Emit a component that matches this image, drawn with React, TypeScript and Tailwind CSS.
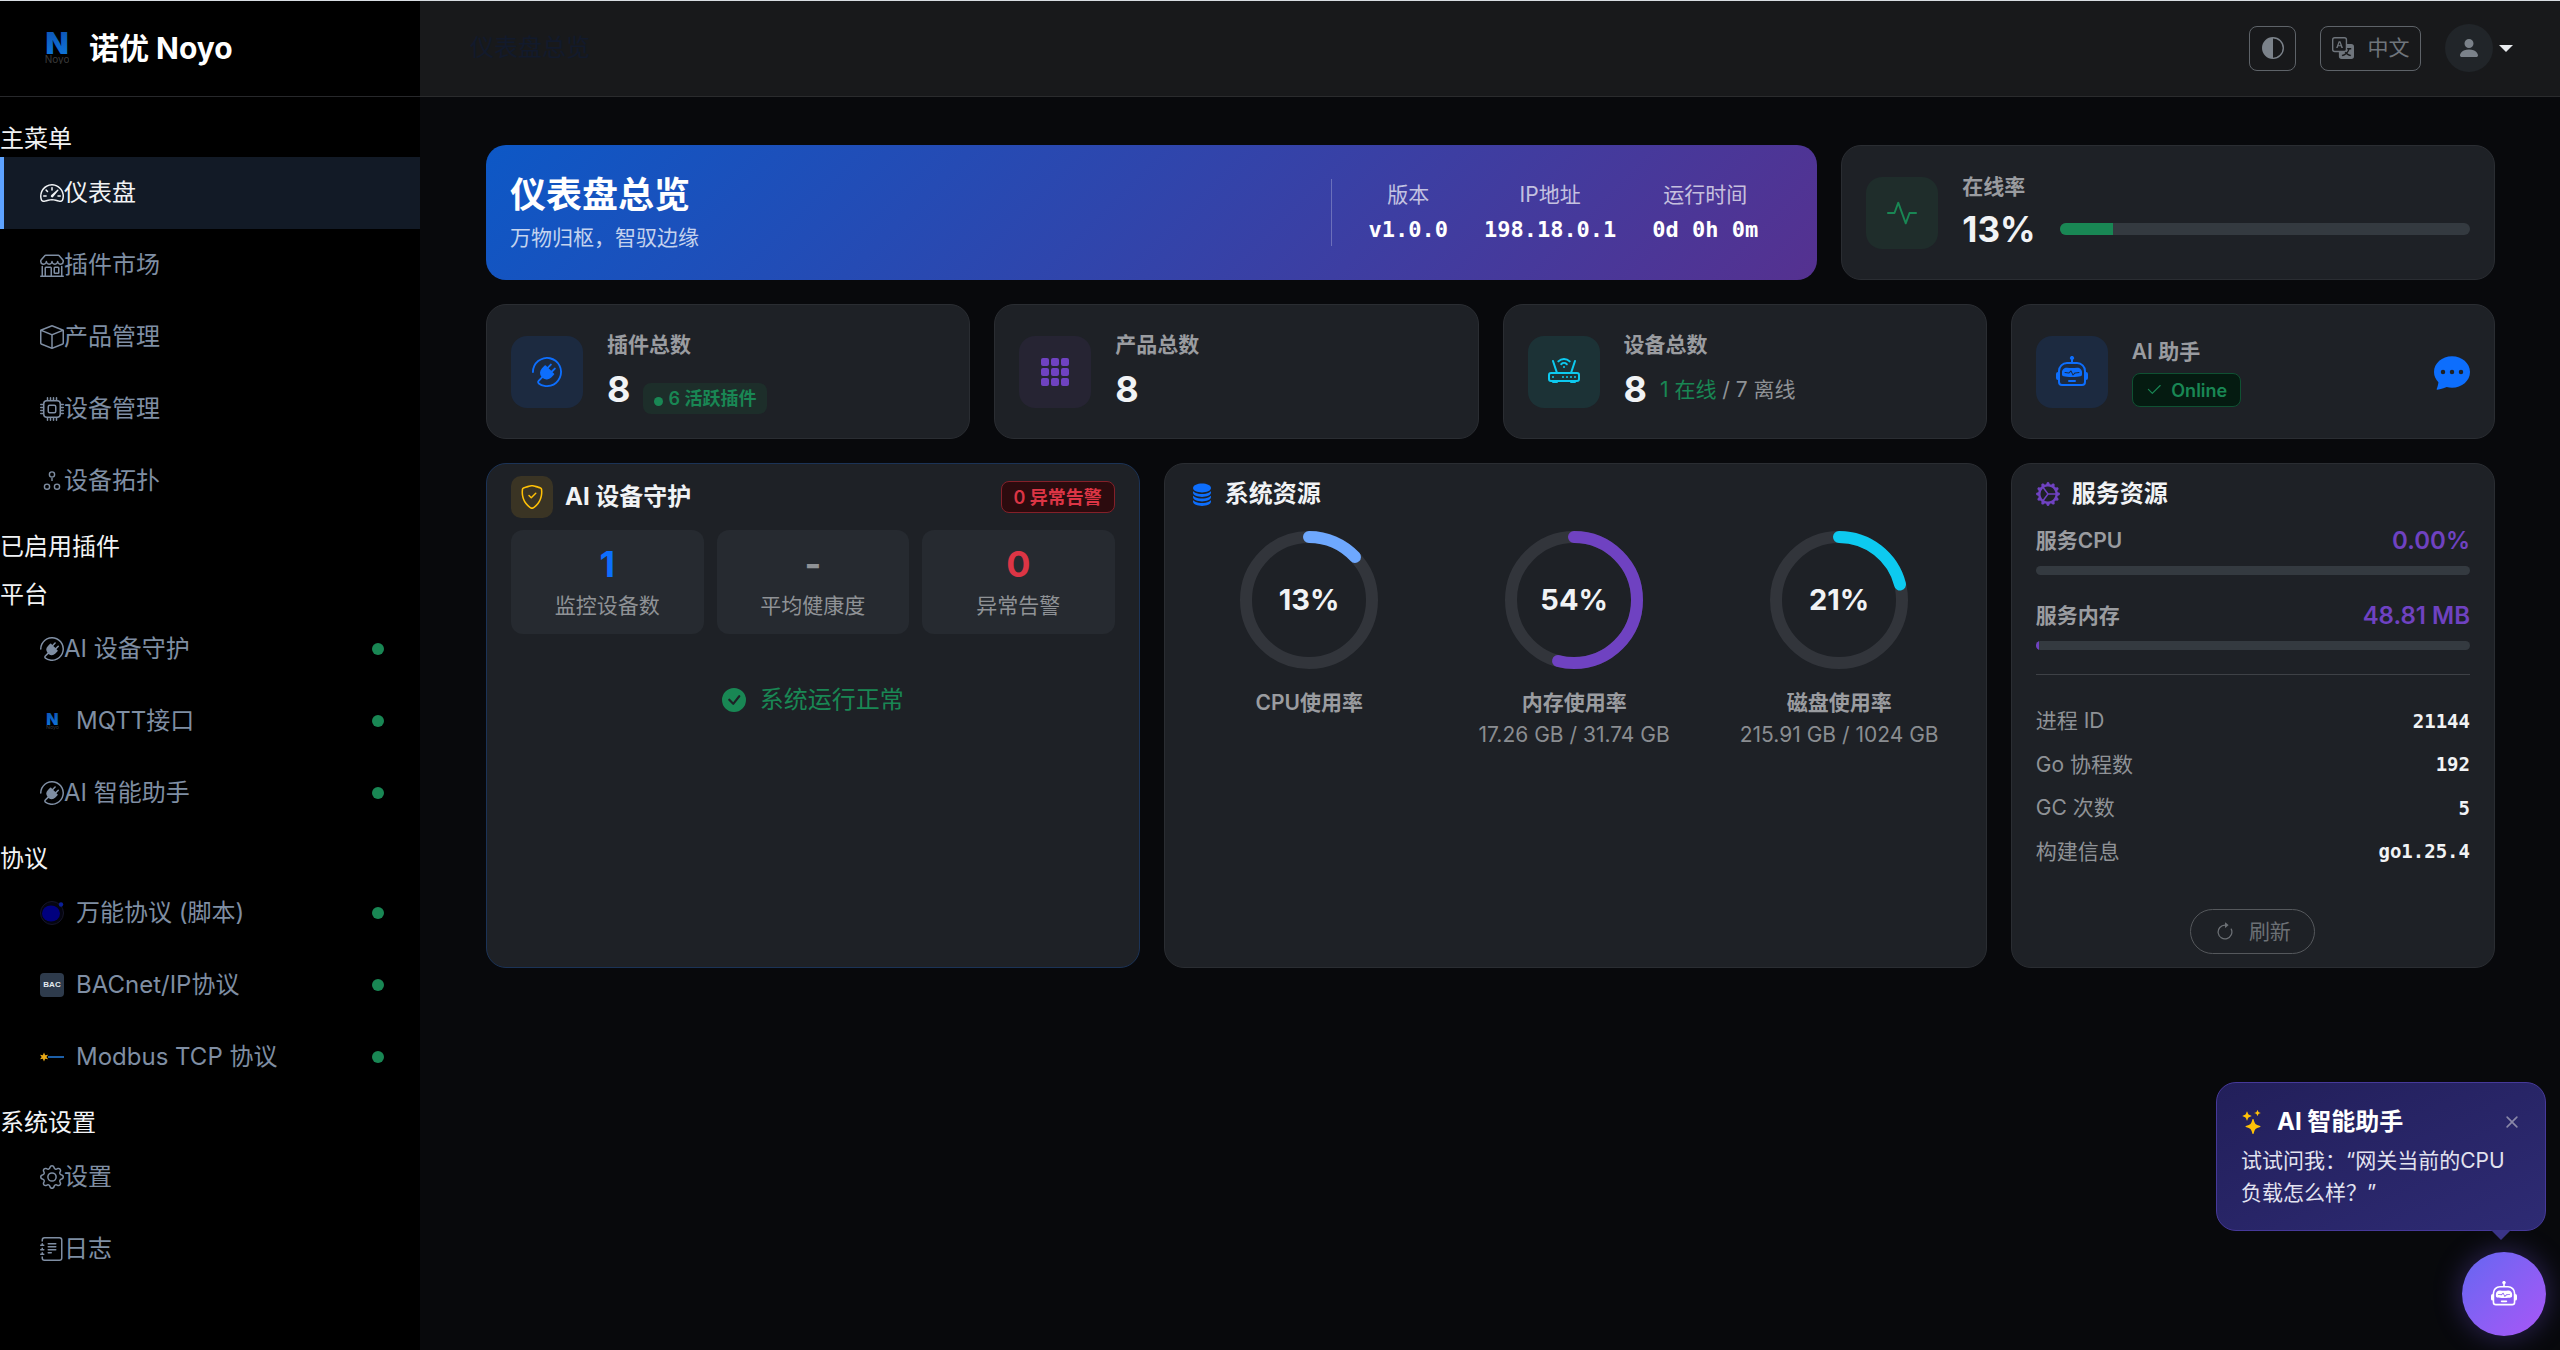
import type { ReactNode } from "react";
import {
  BsActivity,
  BsArrowClockwise,
  BsBox,
  BsChatDotsFill,
  BsCheck2,
  BsCheckCircleFill,
  BsCircleHalf,
  BsCpu,
  BsDatabaseFill,
  BsGear,
  BsGearWideConnected,
  BsGrid3X3GapFill,
  BsJournalText,
  BsPersonFill,
  BsPlugin,
  BsRobot,
  BsRouter,
  BsShieldCheck,
  BsShop,
  BsSpeedometer2,
  BsStars,
  BsTranslate,
  BsX,
} from "react-icons/bs";

const sans = "font-['Inter','Noto_Sans_CJK_SC',sans-serif]";
const mono = "font-['DejaVu_Sans_Mono','Noto_Sans_CJK_SC',monospace]";

// same mark in the brand row and in the MQTT row, only scaled
const NoyoLogo = ({ width, height }: { width: number; height: number }) => (
  <svg width={width} height={height} viewBox="0 0 24 32">
    <defs>
      <linearGradient id="noyo-n" x1="0" y1="0" x2="0" y2="1">
        <stop offset="0" stopColor="#0d4fb0" />
        <stop offset="1" stopColor="#0f7be0" />
      </linearGradient>
    </defs>
    <text x="12" y="22" textAnchor="middle" fontSize="30" fontWeight="900" fill="url(#noyo-n)">
      N
    </text>
    <text x="12" y="31" textAnchor="middle" fontSize="10" fill="#3a3a3a">
      Noyo
    </text>
  </svg>
);

const TopologyIcon = () => (
  <svg width="24" height="24" viewBox="0 0 24 24" fill="none" stroke="currentColor" strokeWidth="1.4">
    <circle cx="12" cy="5.5" r="2.6" />
    <circle cx="7" cy="17.7" r="2.6" />
    <circle cx="17" cy="17.7" r="2.6" />
    <path d="M12 9v3" />
  </svg>
);

const ScriptIcon = () => (
  <svg width="24" height="24" viewBox="0 0 24 24">
    <circle cx="12" cy="12" r="11.5" fill="#050510" stroke="#15152a" />
    <ellipse cx="11" cy="12.5" rx="9" ry="8" fill="#00007e" />
    <circle cx="21" cy="3.5" r="2.2" fill="#0a1f9a" />
  </svg>
);

const ModbusIcon = () => (
  <svg width="24" height="24" viewBox="0 0 24 24">
    <path
      d="M4 7.5l1.2 2.8 2.9-.6-1.7 2.3 1.7 2.3-2.9-.6L4 16.5l-1.2-2.8-2.8.6 1.7-2.3L0 9.7l2.8.6z"
      fill="#e8a917"
    />
    <rect x="8" y="11" width="16" height="2" fill="#1c5fa8" />
  </svg>
);

const BacIcon = () => (
  <span className="flex h-6 w-6 items-center justify-center rounded-[4px] bg-[#2e3b4c] font-['Liberation_Sans',sans-serif] text-[8px] font-bold text-[#e6ebf0]">
    BAC
  </span>
);

type NavItem = { icon: ReactNode; label: string; active?: boolean; dot?: boolean; wide?: boolean };

const mainMenu: NavItem[] = [
  { icon: <BsSpeedometer2 size={24} />, label: "仪表盘", active: true },
  { icon: <BsShop size={24} />, label: "插件市场" },
  { icon: <BsBox size={24} />, label: "产品管理" },
  { icon: <BsCpu size={24} />, label: "设备管理" },
  { icon: <TopologyIcon />, label: "设备拓扑" },
];

const platformItems: NavItem[] = [
  { icon: <BsPlugin size={24} />, label: "AI 设备守护", dot: true },
  { icon: <NoyoLogo width={13} height={17} />, label: "MQTT接口", dot: true, wide: true },
  { icon: <BsPlugin size={24} />, label: "AI 智能助手", dot: true },
];

const protocolItems: NavItem[] = [
  { icon: <ScriptIcon />, label: "万能协议 (脚本)", dot: true, wide: true },
  { icon: <BacIcon />, label: "BACnet/IP协议", dot: true, wide: true },
  { icon: <ModbusIcon />, label: "Modbus TCP 协议", dot: true, wide: true },
];

const systemItems: NavItem[] = [
  { icon: <BsGear size={24} />, label: "设置" },
  { icon: <BsJournalText size={24} />, label: "日志" },
];

const NavRow = ({ item }: { item: NavItem }) => (
  <div
    className={`flex h-[72px] items-center pr-9 text-2xl ${
      item.active
        ? "border-l-4 border-[#5ea3ff] bg-[#121a26] pl-9 text-[#f1f3f5]"
        : "pl-10 text-[#7f8ea3]"
    }`}
  >
    <span className={`flex w-6 shrink-0 items-center justify-center ${item.wide ? "mr-3" : ""}`}>
      {item.icon}
    </span>
    <span className="flex-1">{item.label}</span>
    {item.dot && <span className="h-3 w-3 rounded-full bg-[#198754]" />}
  </div>
);

const NavLabel = ({ children, first }: { children: ReactNode; first?: boolean }) => (
  <div className={`h-9 text-2xl leading-9 text-[#f1f3f5] ${first ? "mt-6" : "mt-3"}`}>{children}</div>
);

const Sidebar = () => (
  <aside className="w-[420px] shrink-0 bg-black">
    <div className="flex h-[97px] items-center gap-5 border-b border-[#27282b] pl-[45px]">
      <NoyoLogo width={24} height={32} />
      <span className="text-[30px] font-bold text-white">诺优 Noyo</span>
    </div>
    <NavLabel first>主菜单</NavLabel>
    {mainMenu.map((item) => (
      <NavRow key={item.label} item={item} />
    ))}
    <NavLabel>已启用插件</NavLabel>
    <NavLabel>平台</NavLabel>
    {platformItems.map((item) => (
      <NavRow key={item.label} item={item} />
    ))}
    <NavLabel>协议</NavLabel>
    {protocolItems.map((item) => (
      <NavRow key={item.label} item={item} />
    ))}
    <NavLabel>系统设置</NavLabel>
    {systemItems.map((item) => (
      <NavRow key={item.label} item={item} />
    ))}
  </aside>
);

const Topbar = () => (
  <header className="flex h-[97px] items-center border-b border-[#2a2b2d] bg-[#18191b] pl-[50px] pr-[47px]">
    <span className="flex-1 text-2xl text-[#121a2c]">仪表盘总览</span>
    <button className="flex h-[45px] w-[47px] items-center justify-center rounded-lg border border-[#5e6369] text-[#7b828a]">
      <BsCircleHalf size={22} />
    </button>
    <button className="ml-6 flex h-[45px] w-[101px] items-center justify-center gap-[14px] rounded-lg border border-[#5e6369] text-[21px] text-[#6f757c]">
      <BsTranslate size={22} />
      中文
    </button>
    <span className="ml-6 flex h-12 w-12 items-center justify-center rounded-full bg-[#212529] text-[#7b828a]">
      <BsPersonFill size={24} />
    </span>
    <span className="ml-[6px] h-0 w-0 border-x-[7px] border-t-[7px] border-x-transparent border-t-[#e9ecef]" />
  </header>
);

const cardClass = "rounded-[20px] border border-[#2a2d32] bg-[#1e2126]";

const IconBox = ({ bg, children }: { bg: string; children: ReactNode }) => (
  <span className={`flex h-[72px] w-[72px] shrink-0 items-center justify-center rounded-2xl ${bg}`}>
    {children}
  </span>
);

const CardLabel = ({ children }: { children: ReactNode }) => (
  <div className="text-[21px] font-semibold leading-8 text-[#9a9ca0]">{children}</div>
);

const Hero = () => {
  const stats = [
    { label: "版本", value: "v1.0.0" },
    { label: "IP地址", value: "198.18.0.1" },
    { label: "运行时间", value: "0d 0h 0m" },
  ];
  return (
    <section className="col-span-8 flex h-[135px] items-center justify-between rounded-[20px] bg-[linear-gradient(135deg,#0d58c6,#553190)] pl-6 pr-[59px]">
      <div>
        <h1 className="-mt-[2px] text-4xl font-bold leading-[50px] text-white">仪表盘总览</h1>
        <p className="mt-[2px] text-[21px] leading-8 text-white/75">万物归枢，智驭边缘</p>
      </div>
      <div className="flex h-[67px] items-center gap-9 border-l border-white/25 pl-9">
        {stats.map((s) => (
          <div key={s.label} className="text-center">
            <div className="text-[21px] leading-8 text-white/70">{s.label}</div>
            <div className={`${mono} mt-[3px] text-[22px] font-bold leading-8 text-white`}>{s.value}</div>
          </div>
        ))}
      </div>
    </section>
  );
};

const OnlineCard = () => (
  <section className={`${cardClass} col-span-4 flex h-[135px] items-center gap-6 px-6`}>
    <IconBox bg="bg-[#1f2d2b]">
      <BsActivity size={30} className="text-[#198754]" />
    </IconBox>
    <div className="flex-1">
      <CardLabel>在线率</CardLabel>
      <div className="mt-[1px] flex items-center gap-6">
        <span className="text-[35px] font-bold leading-[50px] text-[#f1f3f5]">13%</span>
        <div className="h-3 flex-1 overflow-hidden rounded-full bg-[#343a40]">
          <div className="h-full w-[13%] bg-[#198754]" />
        </div>
      </div>
    </div>
  </section>
);

const StatCard = ({ icon, label, children }: { icon: ReactNode; label: string; children: ReactNode }) => (
  <section className={`${cardClass} col-span-3 flex h-[135px] items-center gap-6 px-6`}>
    {icon}
    <div>
      <CardLabel>{label}</CardLabel>
      <div className="mt-[3px] flex items-center gap-[13px]">{children}</div>
    </div>
  </section>
);

const Count = ({ value }: { value: string }) => (
  <span className="text-4xl font-bold leading-[50px] text-[#f1f3f5]">{value}</span>
);

const AiAssistantCard = () => (
  <section className={`${cardClass} col-span-3 flex h-[135px] items-center gap-6 px-6`}>
    <IconBox bg="bg-[#1c2a40]">
      <BsRobot size={32} className="text-[#0d6efd]" />
    </IconBox>
    <div className="flex-1">
      <CardLabel>AI 助手</CardLabel>
      <span className="mt-[5px] flex h-[34px] w-[109px] items-center justify-center gap-2 rounded-lg border border-[#0f5132] bg-[#051b11] text-[18px] font-semibold text-[#198754]">
        <BsCheck2 size={18} />
        Online
      </span>
    </div>
    <BsChatDotsFill size={36} className="text-[#0d6efd]" />
  </section>
);

const GuardCard = () => {
  const stats = [
    { value: "1", label: "监控设备数", color: "text-[#0d6efd]" },
    { value: "-", label: "平均健康度", color: "text-[#8f9296]" },
    { value: "0", label: "异常告警", color: "text-[#dc3545]" },
  ];
  return (
    <section className="col-span-4 h-[505px] rounded-[20px] border border-[#1b3357] bg-[#1e2126] px-6 pt-3">
      <div className="flex items-center justify-between">
        <div className="flex items-center gap-3">
          <span className="flex h-[42px] w-[42px] items-center justify-center rounded-[10px] bg-[#3a3424]">
            <BsShieldCheck size={24} className="text-[#ffc107]" />
          </span>
          <span className="text-2xl font-bold text-[#f1f3f5]">AI 设备守护</span>
        </div>
        <span className="flex h-8 w-[114px] items-center justify-center rounded-lg border border-[#842029] bg-[#2c0b0e] text-[18px] font-semibold text-[#dc3545]">
          0 异常告警
        </span>
      </div>
      <div className="mt-3 grid grid-cols-3 gap-[13px]">
        {stats.map((s) => (
          <div key={s.label} className="flex h-[104px] flex-col items-center justify-center rounded-xl bg-[#262a30]">
            <div className={`-mt-[2px] mb-[2px] text-4xl font-bold leading-[48px] ${s.color}`}>{s.value}</div>
            <div className="text-[21px] leading-8 text-[#8f9296]">{s.label}</div>
          </div>
        ))}
      </div>
      <div className="mt-[50px] flex items-center justify-center gap-[14px] text-2xl leading-8 text-[#198754]">
        <BsCheckCircleFill size={24} />
        系统运行正常
      </div>
    </section>
  );
};

const gauges = [
  { pct: 13, value: "13%", label: "CPU使用率", sub: "", color: "#6ea8fe" },
  { pct: 54, value: "54%", label: "内存使用率", sub: "17.26 GB / 31.74 GB", color: "#6f42c1" },
  { pct: 21, value: "21%", label: "磁盘使用率", sub: "215.91 GB / 1024 GB", color: "#0dcaf0" },
];

const Gauge = ({ pct, value, color }: { pct: number; value: string; color: string }) => {
  const r = 63;
  const c = 2 * Math.PI * r;
  return (
    <div className="relative h-[138px] w-[138px]">
      <svg width="138" height="138" viewBox="0 0 138 138" className="-rotate-90">
        <circle cx="69" cy="69" r={r} fill="none" stroke="#32353b" strokeWidth="12" />
        <circle
          cx="69"
          cy="69"
          r={r}
          fill="none"
          stroke={color}
          strokeWidth="12"
          strokeLinecap="round"
          strokeDasharray={`${(c * pct) / 100} ${c}`}
        />
      </svg>
      <span className="absolute inset-0 flex items-center justify-center text-[29px] font-bold text-[#f1f3f5]">
        {value}
      </span>
    </div>
  );
};

const ResourceCard = () => (
  <section className={`${cardClass} col-span-5 h-[505px] px-[25px] pt-4`}>
    <div className="flex items-center gap-[11px]">
      <BsDatabaseFill size={24} className="text-[#0d6efd]" />
      <span className="text-2xl font-bold leading-7 text-[#f1f3f5]">系统资源</span>
    </div>
    <div className="-ml-[13px] mt-[23px] grid w-[795px] grid-cols-3">
      {gauges.map((g) => (
        <div key={g.label} className="flex flex-col items-center">
          <Gauge pct={g.pct} value={g.value} color={g.color} />
          <div className="mt-[18px] text-[21px] font-semibold leading-8 text-[#9a9ca0]">{g.label}</div>
          {g.sub && <div className="text-[21px] leading-8 text-[#8a8d91]">{g.sub}</div>}
        </div>
      ))}
    </div>
  </section>
);

const ServiceBar = ({ label, value, fill }: { label: string; value: string; fill?: boolean }) => (
  <div className="mb-[25px]">
    <div className="flex items-center justify-between leading-8">
      <span className="text-[21px] font-semibold text-[#9a9ca0]">{label}</span>
      <span className="text-2xl font-semibold text-[#6f42c1]">{value}</span>
    </div>
    <div className="mt-[9px] h-[9px] overflow-hidden rounded-full bg-[#343a40]">
      {fill && <div className="h-full w-[3px] bg-[#6f42c1]" />}
    </div>
  </div>
);

const ServiceCard = () => {
  const rows = [
    ["进程 ID", "21144"],
    ["Go 协程数", "192"],
    ["GC 次数", "5"],
    ["构建信息", "go1.25.4"],
  ];
  return (
    <section className={`${cardClass} col-span-3 flex h-[505px] flex-col px-6 pt-4`}>
      <div className="mb-[17px] flex items-center gap-3">
        <BsGearWideConnected size={24} className="text-[#6f42c1]" />
        <span className="text-2xl font-bold leading-7 text-[#f1f3f5]">服务资源</span>
      </div>
      <ServiceBar label="服务CPU" value="0.00%" />
      <ServiceBar label="服务内存" value="48.81 MB" fill />
      <div className="-mt-[1px] border-t border-[#3e4146] pt-[24px]">
        {rows.map(([k, v]) => (
          <div key={k} className="flex h-[43.5px] items-center justify-between">
            <span className="text-[21px] text-[#8f9296]">{k}</span>
            <span className={`${mono} text-[19px] font-bold text-[#f1f3f5]`}>{v}</span>
          </div>
        ))}
      </div>
      <button className="mx-auto mt-[36px] flex h-[45px] w-[125px] items-center justify-center gap-[14px] rounded-full border border-[#55585c] text-[21px] text-[#6c7075]">
        <BsArrowClockwise size={20} />
        刷新
      </button>
    </section>
  );
};

const AssistantPopup = () => (
  <div className="absolute bottom-[14px] right-[14px] flex flex-col items-end">
    <div className="relative h-[149px] w-[330px] rounded-[20px] border border-[#46399a] bg-gradient-to-br from-[#221f5a] to-[#2e2b74] px-6 pt-[21px]">
      <div className="flex items-center">
        <BsStars size={24} className="text-[#ffc107]" />
        <span className="ml-[12px] flex-1 text-2xl font-bold leading-9 text-white">AI 智能助手</span>
        <BsX size={26} className="-mr-1 text-[#8a88a8]" />
      </div>
      <p className="mt-[5px] text-[21px] leading-8 text-[#e2e2ef]">试试问我：“网关当前的CPU负载怎么样？”</p>
      <span className="absolute -bottom-[10px] right-[34px] h-0 w-0 border-x-[10px] border-t-[10px] border-x-transparent border-t-[#3a3488]" />
    </div>
    <div className="mt-[21px] flex h-[84px] w-[84px] items-center justify-center rounded-full bg-gradient-to-br from-[#6366f1] to-[#a855f7] text-white shadow-[0_0_28px_rgba(124,92,246,0.35)]">
      <BsRobot size={26} />
    </div>
  </div>
);

const App = () => (
  <div className={`${sans} relative flex h-[1350px] w-[2560px] overflow-hidden bg-[#08090c]`}>
    <span className="absolute inset-x-0 top-0 h-px bg-[#d8dde2]" />
    <Sidebar />
    <div className="flex-1">
      <Topbar />
      <main className="grid grid-cols-12 gap-6 pl-[66px] pr-[65px] pt-12">
        <Hero />
        <OnlineCard />
        <StatCard
          label="插件总数"
          icon={
            <IconBox bg="bg-[#1c2a40]">
              <BsPlugin size={30} className="text-[#0d6efd]" />
            </IconBox>
          }
        >
          <Count value="8" />
          <span className="mt-[18px] flex h-[31px] w-[124px] items-center justify-center gap-[5px] rounded-lg bg-[#1d2e2a] text-[18px] font-semibold text-[#198754]">
            <span className="mt-[6px] h-[9px] w-[9px] rounded-full bg-[#198754]" />6 活跃插件
          </span>
        </StatCard>
        <StatCard
          label="产品总数"
          icon={
            <IconBox bg="bg-[#262433]">
              <BsGrid3X3GapFill size={32} className="text-[#6f42c1]" />
            </IconBox>
          }
        >
          <Count value="8" />
        </StatCard>
        <StatCard
          label="设备总数"
          icon={
            <IconBox bg="bg-[#1c3236]">
              <BsRouter size={32} className="text-[#0dcaf0]" />
            </IconBox>
          }
        >
          <Count value="8" />
          <span className="mt-[2px] text-[21px] text-[#8f9296]">
            <span className="text-[#198754]">1 在线</span> / 7 离线
          </span>
        </StatCard>
        <AiAssistantCard />
        <GuardCard />
        <ResourceCard />
        <ServiceCard />
      </main>
    </div>
    <AssistantPopup />
  </div>
);

export default App;
